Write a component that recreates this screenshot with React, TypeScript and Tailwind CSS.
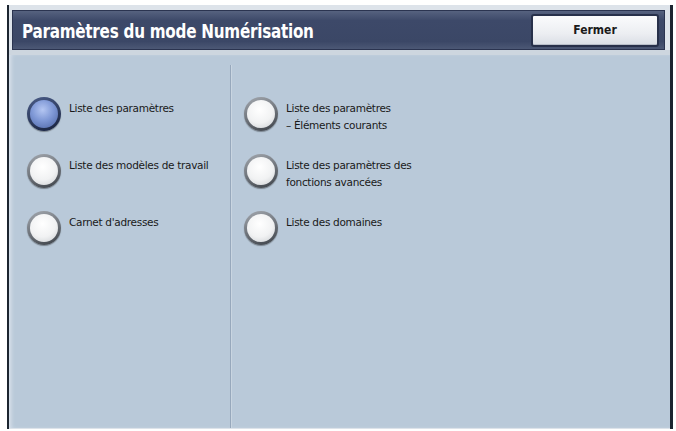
const leftItems = [
  { label: ["Liste des paramètres"], selected: true },
  { label: ["Liste des modèles de travail"], selected: false },
  { label: ["Carnet d'adresses"], selected: false },
];

const rightItems = [
  { label: ["Liste des paramètres", "– Éléments courants"], selected: false },
  { label: ["Liste des paramètres des", "fonctions avancées"], selected: false },
  { label: ["Liste des domaines"], selected: false },
];

function Radio({ selected }: { selected: boolean }) {
  if (selected) {
    return (
      <div className="w-[34px] h-[34px] shrink-0 rounded-full p-[3px] bg-[linear-gradient(160deg,#4a5c88,#17213d)] shadow-[0_1px_1px_rgba(0,0,0,0.35)]">
        <div className="w-full h-full rounded-full bg-[radial-gradient(circle_at_45%_35%,#b4c6f2_0%,#7f98d6_45%,#4a62a2_100%)]" />
      </div>
    );
  }
  return (
    <div className="w-[34px] h-[34px] shrink-0 rounded-full p-[3px] bg-[linear-gradient(160deg,#a4a9b0,#3b4047)] shadow-[0_1px_1px_rgba(0,0,0,0.35)]">
      <div className="w-full h-full rounded-full bg-[radial-gradient(circle_at_45%_35%,#ffffff_0%,#f1f2f3_55%,#c9ccd0_100%)]" />
    </div>
  );
}

function Option({ label, selected }: { label: string[]; selected: boolean }) {
  return (
    <div className="h-[57px] flex items-start gap-[8px]">
      <Radio selected={selected} />
      <div className="pt-[3px] text-[10.5px] leading-[17px] text-[#1a1a1a] font-['DejaVu_Sans',sans-serif] tracking-[-0.3px]">
        {label.map((l) => (
          <div key={l}>{l}</div>
        ))}
      </div>
    </div>
  );
}

export default function App() {
  return (
    <div className="w-[676px] h-[431px] bg-white pt-[5px] pl-[7px]">
      <div className="w-[666px] h-[424px] border-l-2 border-r-[3px] border-[#1c2530] bg-[#dde3ea] flex flex-col">
        {/* header */}
        <div className="pt-[5px] pl-[3px] pr-[5px]">
          <div className="h-[40px] flex items-center justify-between bg-[linear-gradient(#56627f,#3d4969_25%,#3b4766_80%,#4c5875)] border border-[#2b3450] pl-[9px] pr-[5px]">
            <span className="inline-block pt-[2px] origin-left scale-x-[0.845] whitespace-nowrap text-white font-bold text-[20px] font-['DejaVu_Sans_Condensed','DejaVu_Sans',sans-serif] tracking-[-0.3px]">
              Paramètres du mode Numérisation
            </span>
            <button className="w-[128px] h-[33px] rounded-[3px] border-2 border-[#27304a] bg-[linear-gradient(#fafbfc,#eceef2_60%,#dadee5)] text-[12px] font-bold text-[#1a1a1a] font-['DejaVu_Sans_Condensed','DejaVu_Sans',sans-serif] shadow-[inset_0_-1px_0_#b8bec8]">
              Fermer
            </button>
          </div>
        </div>
        <div className="h-[5px] bg-[#cdd6df]" />

        {/* body */}
        <div className="flex-1 flex bg-[#b9c9d9] shadow-[inset_4px_0_4px_-2px_#dbe3ec] mb-[1px]">
          <div className="w-[221px] pl-[18px] pt-[42px]">
            {leftItems.map((it) => (
              <Option key={it.label[0]} label={it.label} selected={it.selected} />
            ))}
          </div>
          <div className="mt-[10px] w-[2px] border-l border-[#97a8bc] bg-[#c9d5e1]" />
          <div className="flex-1 pl-[12px] pt-[42px]">
            {rightItems.map((it) => (
              <Option key={it.label.join()} label={it.label} selected={it.selected} />
            ))}
          </div>
        </div>
      </div>
    </div>
  );
}
